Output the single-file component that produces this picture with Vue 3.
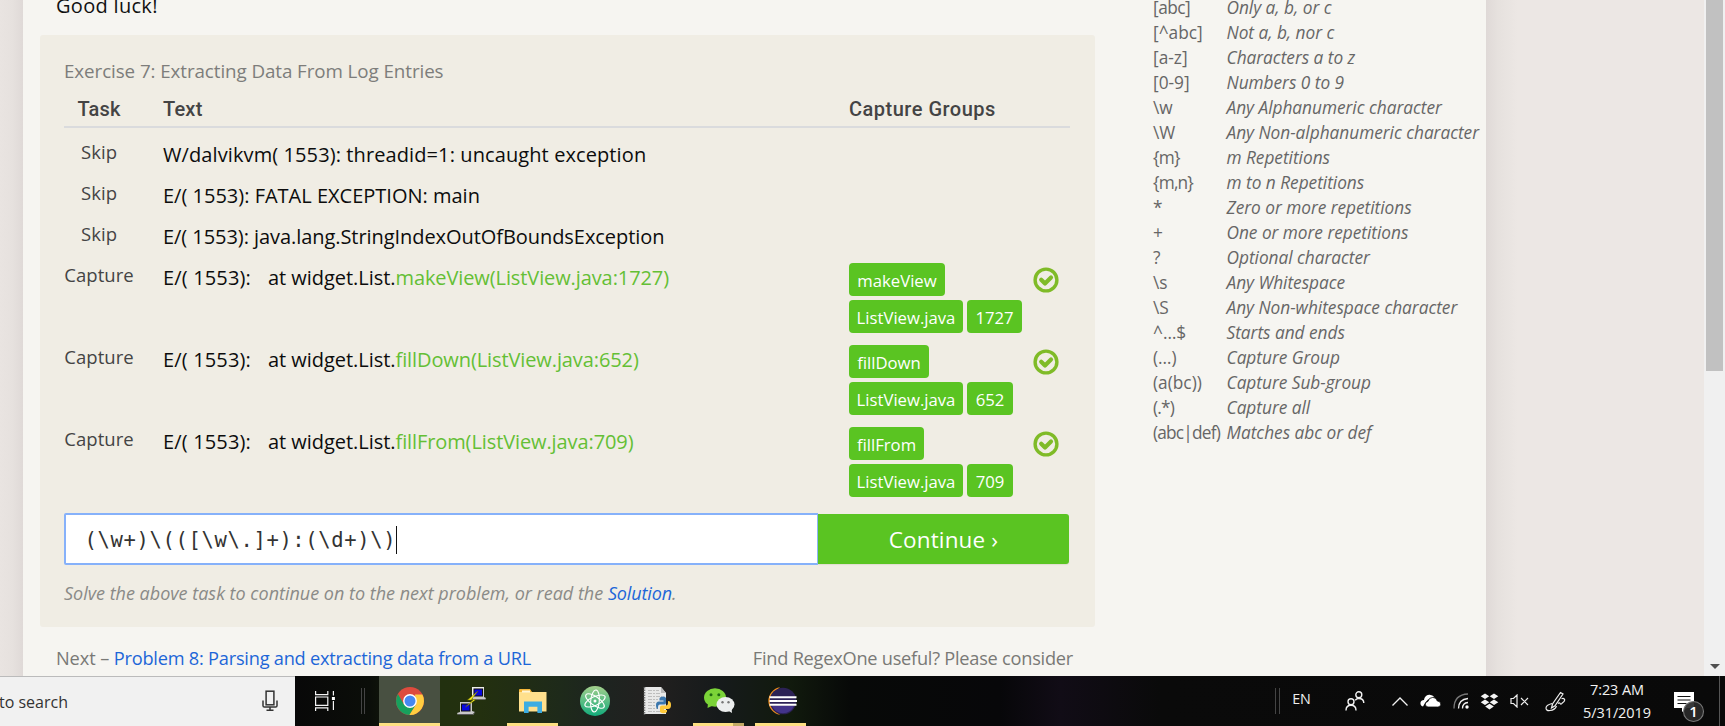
<script setup>
const skips = [
  { text: 'W/dalvikvm( 1553): threadid=1: uncaught exception', cls: 'wide' },
  { text: 'E/( 1553): FATAL EXCEPTION: main', cls: '' },
  { text: 'E/( 1553): java.lang.StringIndexOutOfBoundsException', cls: 'snug' },
]
const captures = [
  { hit: 'makeView(ListView.java:1727)', name: 'makeView', line: '1727', size: 'w96', lineSize: 'w55' },
  { hit: 'fillDown(ListView.java:652)', name: 'fillDown', line: '652', size: 'w80', lineSize: 'w46' },
  { hit: 'fillFrom(ListView.java:709)', name: 'fillFrom', line: '709', size: 'w75', lineSize: 'w46' },
]
const cheats = [
  ['[abc]', 'Only a, b, or c', 'k1'],
  ['[^abc]', 'Not a, b, nor c', ''],
  ['[a-z]', 'Characters a to z', ''],
  ['[0-9]', 'Numbers 0 to 9', ''],
  ['\\w', 'Any Alphanumeric character', ''],
  ['\\W', 'Any Non-alphanumeric character', ''],
  ['{m}', 'm Repetitions', 'k2'],
  ['{m,n}', 'm to n Repetitions', 'k2'],
  ['*', 'Zero or more repetitions', ''],
  ['+', 'One or more repetitions', ''],
  ['?', 'Optional character', ''],
  ['\\s', 'Any Whitespace', ''],
  ['\\S', 'Any Non-whitespace character', ''],
  ['^…$', 'Starts and ends', ''],
  ['(…)', 'Capture Group', ''],
  ['(a(bc))', 'Capture Sub-group', ''],
  ['(.*)', 'Capture all', 'k2'],
  ['(abc|def)', 'Matches abc or def', 'k2'],
]
</script>

<template>
  <div class="screen">
    <div class="viewport">
      <div class="gutter left"></div>
      <div class="sheet">
        <main class="lesson">
          <p class="luck">Good luck!</p>
          <section class="card">
            <h2 class="title">Exercise 7: Extracting Data From Log Entries</h2>
            <div class="row head">
              <div class="task">Task</div>
              <div class="text">Text</div>
              <div class="groups">Capture Groups</div>
            </div>
            <div class="rows">
              <div v-for="s in skips" :key="s.text" class="row">
                <div class="task">Skip</div>
                <div class="text" :class="s.cls">{{ s.text }}</div>
              </div>
              <div v-for="c in captures" :key="c.name" class="row tall">
                <div class="task">Capture</div>
                <div class="text"><span class="tag">E/( 1553):</span><span class="at">at widget.List.</span><span class="hit">{{ c.hit }}</span></div>
                <div class="groups">
                  <div class="badges"><b :class="c.size">{{ c.name }}</b></div>
                  <div class="badges"><b class="w114">ListView.java</b><b :class="c.lineSize">{{ c.line }}</b></div>
                </div>
                <svg class="ok" viewBox="0 0 26 26"><circle cx="13" cy="13" r="10.9" fill="none" stroke="#7fbb27" stroke-width="3.4" /><path d="M8.2 12.800 12 16.600 18 10.600" fill="none" stroke="#7fbb27" stroke-width="4.200" stroke-linejoin="round" stroke-linecap="round" /></svg>
              </div>
            </div>
            <div class="answer">
              <div class="field">(\w+)\(([\w\.]+):(\d+)\)<i class="caret"></i></div>
              <button class="go">Continue ›</button>
            </div>
            <p class="note">Solve the above task to continue on to the next problem, or read the <a>Solution</a>.</p>
          </section>
          <div class="foot">
            <p>Next – <a>Problem 8: Parsing and extracting data from a URL</a></p>
            <p class="find">Find RegexOne useful? Please consider</p>
          </div>
        </main>
        <aside class="cheats">
          <div v-for="c in cheats" :key="c[0]" class="cheat"><span class="key" :class="c[2]">{{ c[0] }}</span><i>{{ c[1] }}</i></div>
        </aside>
      </div>
      <div class="gutter right"></div>
      <div class="scroll"><div class="thumb"></div><div class="down"></div></div>
    </div>

    <div class="taskbar">
      <div class="search">
        <div class="query">to search</div>
        <svg class="mic" viewBox="0 0 16 22" fill="none" stroke="#333"><rect x="4.1" y="1.2" width="7.8" height="13.6" stroke-width="1.5" /><path d="M1 10.5v5.2q0 1.4 1.4 1.4h11.2q1.4 0 1.4-1.4v-5.2M8 17.5v2.5M4.5 20.2h7" stroke-width="1.5" /></svg>
      </div>
      <div class="cell view">
        <svg width="22" height="22" viewBox="0 0 22 22" fill="none" stroke="#f4f4f4" stroke-width="1.2"><path d="M1.6 1v3.6h12.2V1M1.6 21v-3.2h12.2V21M1.6 7h12.2v8.4H1.6zM19.4 1v4.4M19.4 11v9" /><rect x="17.9" y="7" width="3" height="3" fill="#fff" stroke="none" /></svg>
      </div>
      <div class="bars first"></div>
      <div class="app active under">
        <svg width="28" height="28" viewBox="0 0 28 28"><circle cx="14" cy="14" r="14" fill="#dd4b3e" /><path d="M1.9 7A14 14 0 0 0 13.6 28L20 17.4 14 14 8 17.4z" fill="#17a05d" /><path d="M26.4 7.6A14 14 0 0 1 13.4 28L20.2 17.2 19 7.6z" fill="#ffcd40" /><circle cx="14" cy="14" r="6.9" fill="#fff" /><circle cx="14" cy="14" r="5.5" fill="#4688f1" /></svg>
      </div>
      <div class="app">
        <svg width="29" height="30" viewBox="0 0 29 30"><path d="M15 1h12v10l2 1-1 2H16l-1-3z" fill="#c8c8c8" /><path d="M15 1h12v1.5H16.500v9H15zM3 17h12v1H4v8H3z" fill="#eee" /><rect x="17" y="3" width="8.500" height="7" fill="#0808e0" stroke="#111" /><path d="M3 16h12v9l3 1-2 3H1l-1-2 3-1z" fill="#c8c8c8" /><path d="M1 28.500h15l2-2.500" stroke="#555" fill="none" /><path d="M16 13.500h12" stroke="#666" /><rect x="4.500" y="18" width="8.500" height="7" fill="#0808e0" stroke="#111" /><path d="M21 5 10.500 14h5.500L8.500 21 19 13.500h-4.500z" fill="#f5ee22" stroke="#6d6900" stroke-width=".5" /></svg>
      </div>
      <div class="app under inset">
        <svg width="28" height="24" viewBox="0 0 28 24"><path d="M0 3V1q0-1 1-1h10l2 3z" fill="#f5b73a" /><path d="M0 3h27.500v19.500H0z" fill="#ffe08d" /><path d="M3 1.500h8v2H3z" fill="#fff6d8" /><path d="M5 24V12.500h18V24h-4.600v-6.300H9.600V24z" fill="#3cade2" /></svg>
      </div>
      <div class="app">
        <svg width="30" height="30" viewBox="0 0 30 30"><defs><linearGradient id="atom" x2="0" y2="1"><stop stop-color="#a3cf8c" /><stop offset="1" stop-color="#12ab7b" /></linearGradient></defs><circle cx="15" cy="15" r="15" fill="url(#atom)" /><g fill="none" stroke="#fff" stroke-width="1.100"><ellipse cx="15" cy="15" rx="11" ry="4.300" transform="rotate(-25 15 15)" /><ellipse cx="15" cy="15" rx="11" ry="4.300" transform="rotate(35 15 15)" /><ellipse cx="15" cy="15" rx="11" ry="4.300" transform="rotate(95 15 15)" /></g><circle cx="15" cy="15" r="1.500" fill="#fff" /></svg>
      </div>
      <div class="app">
        <svg width="29" height="30" viewBox="0 0 29 30"><path d="M1 1h17l5 6v21H1z" fill="#e8e8e8" /><path d="M18 1v6h5z" fill="#b9b9b9" /><path d="M5 4.500h11M5 7.500h12M5 10.500h14M5 13.500h10M5 16.500h8M5 19.500h8M5 22.500h10M5 25.500h14" stroke="#bdbdbd" stroke-dasharray="4 1 2 1" /><path d="M1.500 1v28" stroke="#777" stroke-width="1.600" stroke-dasharray="1.500 1" /><path d="M17 11.500q4-2 6 .5v5q0 1.500-2 1.500h-4q-2 0-2 3v1.500q-2 0-2-4 0-3.500 3-3.500h4.500v-1H16.500v-2z" fill="#3a76ad" /><path d="M25 15q3 0 3 4t-3 4h-4v1h3v2q-3.500 2.500-7 0v-5q0-1.500 2-1.500h4q2 0 2-3z" fill="#ffc93a" /></svg>
      </div>
      <div class="app under inset grouped">
        <svg width="31" height="26" viewBox="0 0 31 26"><ellipse cx="11" cy="9.500" rx="11" ry="9.300" fill="#7bd338" /><path d="M4 15 3.500 20 9 17.500z" fill="#7bd338" /><circle cx="7" cy="6.800" r="1.500" fill="#1f6a12" /><circle cx="14.800" cy="6.800" r="1.500" fill="#1f6a12" /><ellipse cx="21.500" cy="16.500" rx="9" ry="7.600" fill="#eceeee" /><path d="M24 22.500l4 2.500-.5-5z" fill="#eceeee" /><circle cx="18.500" cy="14.300" r="1.200" fill="#777" /><circle cx="24.500" cy="14.300" r="1.200" fill="#777" /></svg>
      </div>
      <div class="app under inset">
        <svg width="31" height="28" viewBox="0 0 31 28"><path d="M14 .2A14 14 0 0 0 14 27.800 17 17 0 0 1 14 .2z" fill="#f7931e" /><circle cx="17" cy="14" r="13.300" fill="#2c2255" /><path d="M6 19a12 12 0 0 0 22 0z" fill="#43348a" /><path d="M3.500 10.200h27M3.500 14h27.500M3.500 17.800h27" stroke="#fff" stroke-width="2.100" /></svg>
      </div>
      <div class="space"></div>
      <div class="bars"></div>
      <div class="lang">EN</div>
      <div class="cell people">
        <svg width="20" height="20" viewBox="0 0 20 20" fill="none" stroke="#f2f2f2" stroke-width="1.400"><circle cx="6" cy="10.800" r="3" /><path d="M1 19.500q0-5.200 5-5.200t5 5.200" /><circle cx="13.800" cy="3.800" r="3" /><path d="M10.200 9.200q1.500-1.700 3.600-1.700 5 0 5 4.600" /></svg>
      </div>
      <div class="cell w18"><svg width="16" height="9" viewBox="0 0 16 9" fill="none" stroke="#f2f2f2" stroke-width="1.300"><path d="M.5 8.500 8 1l7.500 7.500" /></svg></div>
      <div class="cell w42"><svg width="21" height="14" viewBox="0 0 21 14"><path d="M3 12.500Q0 11.500.5 8.500 1 6 4 6 4.500 1.500 9 .8q3.500-.3 5.500 2.500L8 5.500 5 9z" fill="#fff" /><path d="M8 13q-2.700-.3-2.700-2.800 0-2.300 2.700-2.800.9-4 4.800-4 3.600 0 4.500 3.600 3.700.3 3.500 3.200-.2 2.800-3 2.800z" fill="#fff" stroke="#0a0a0a" stroke-width=".8" /></svg></div>
      <div class="cell w19"><svg width="16" height="16" viewBox="0 0 16 16" fill="none" stroke="#eee" stroke-width="1.300"><circle cx="14" cy="14" r="1.700" fill="#fff" stroke="none" /><path d="M9.500 15.500q0-5.500 5.500-6" /><path d="M5.500 15.500Q5.500 6.500 15 5.500" /><path d="M1 15.500Q1 1.500 15 1" stroke="#777" /></svg></div>
      <div class="cell w38"><svg width="19" height="17" viewBox="0 0 19 17" fill="#f4f4f4"><path d="M5 .5 9.300 3.300 5 6.100.7 3.300zM14 .5l4.300 2.800L14 6.100 9.700 3.300zM5 6.500l4.300 2.800L5 12.100.7 9.300zM14 6.500l4.300 2.800-4.300 2.800-4.300-2.800zM9.500 10.800l4.300 2.800-4.300 2.900-4.300-2.900z" /></svg></div>
      <div class="cell w22"><svg width="19" height="14" viewBox="0 0 19 14" fill="none" stroke="#eee" stroke-width="1.200"><path d="M1 4.500h2.500L7 1v12L3.500 9.500H1zM11 4l7 7M18 4l-7 7" /></svg></div>
      <div class="cell w50"><svg width="21" height="21" viewBox="0 0 21 21" fill="none" stroke="#eee" stroke-width="1.200"><path d="M6.500 17 7.500 13 15.500 1.500 18 3 10 14.800zM7 12.500Q1 14 1 17t4 2.500q5-.5 6.500-4.500M13 12.500q1.500-1 2-.2.500 1.500 2 0 3.500-2.500 2.500-4t-3-.5" /></svg></div>
      <div class="clock"><div class="time">7:23 AM</div><div class="date">5/31/2019</div></div>
      <div class="cell notes">
        <svg width="32" height="32" viewBox="0 0 32 32"><path d="M1 1h20v16H14l-5 4v-4H1z" fill="#fff" /><path d="M4.500 5.500h13M4.500 9h13M4.500 12.500h9" stroke="#111" stroke-width="1.200" /><circle cx="20.500" cy="20.500" r="10" fill="#2a2a2a" fill-opacity=".93" stroke="#777" stroke-width="1.100" /></svg>
        <span class="count">1</span>
      </div>
      <div class="edge"></div>
    </div>
  </div>
</template>

<style>
body { margin: 0; }
</style>
<style scoped>
.screen { width: 1725px; height: 726px; overflow: hidden; font-family: "Open Sans", "Noto Sans", sans-serif; }
p, h2 { margin: 0; font-weight: 400; }
a { color: #1d66d8; }
.viewport { display: flex; height: 676px; overflow: hidden; background: #ece7e4; }
.gutter.left { width: 23px; background: linear-gradient(90deg, #e9e4e1, #e6e1de 55%, #dfd9d7); }
.gutter.right { flex: 1; background: linear-gradient(90deg, #dfd9d7, #e6e1de 12px, #ece7e4 32px); }
.sheet { width: 1463px; flex: none; display: flex; background: #f6f5f1; }
.scroll { width: 21px; background: #f0f0f0; display: flex; flex-direction: column; align-items: center; justify-content: space-between; }
.thumb { width: 17px; height: 371px; background: #c1c1c1; }
.down { margin-bottom: 7px; border: 5px solid transparent; border-top-color: #505050; border-bottom: 0; }

.lesson { width: 1055px; flex: none; padding-left: 17px; white-space: nowrap; }
.luck { margin-top: -8px; height: 43px; box-sizing: border-box; padding-left: 16px; font-size: 20px; line-height: 28px; letter-spacing: .3px; color: #111; }
.card { height: 592px; box-sizing: border-box; padding: 23px 26px 0 24px; background: #f0ede4; border-radius: 3px; }
.title { font-size: 18.8px; line-height: 26px; letter-spacing: -.08px; color: #7d7d7b; }
.row { display: flex; height: 41px; position: relative; }
.row.tall { height: 82px; }
.task { width: 70px; margin-right: 29px; text-align: center; font-size: 18.5px; line-height: 28px; letter-spacing: .05px; color: #444; padding-top: 1px; }
.text { width: 686px; font-size: 20px; line-height: 28px; padding-top: 4px; white-space: pre; color: #0c0c0c; }
.text.wide { letter-spacing: .1px; }
.text.snug { letter-spacing: -.06px; }
.row.head { height: 42px; border-bottom: 2px solid #dadbdd; margin-right: -1px; font-family: Roboto, sans-serif; font-weight: 500; }
.head > div { font-size: 20px; line-height: 26px; padding-top: 12px; color: #444; letter-spacing: .2px; }
.head .groups { letter-spacing: .5px; }
.rows { padding-top: 9px; }
.tag { display: inline-block; width: 105px; letter-spacing: .15px; }
.at { display: inline-block; width: 127.5px; letter-spacing: -.04px; }
.hit { color: #64bf35; letter-spacing: -.1px; }
.rows .groups { width: 184px; padding-top: 3px; }
.badges { display: flex; gap: 4px; margin-bottom: 4px; }
.badges b { height: 33px; border-radius: 4px; background: #5ac422; color: #fff; font-weight: 400; font-size: 16.7px; line-height: 35px; text-align: center; }
.w96 { width: 96px; }
.w80 { width: 80px; }
.w75 { width: 75px; }
.w114 { width: 114px; }
.w55 { width: 55px; }
.w46 { width: 46px; }
.ok { width: 26px; height: 26px; margin: 6.5px 0 0 .3px; }
.answer { display: flex; margin-top: 7px; height: 52px; }
.field { width: 754px; box-sizing: border-box; border: 2px solid #86b1fa; border-right-width: 1px; border-radius: 2px 0 0 2px; background: #fff; padding: 1px 0 0 18.5px; display: flex; align-items: center; font-family: "DejaVu Sans Mono", monospace; font-size: 20.5px; letter-spacing: .65px; color: #333; }
.caret { width: 1px; height: 28px; background: #111; }
.go { flex: 1; margin: 1px 0; padding: 1px 0 0; border: 0; border-radius: 0 3px 3px 0; background: #5ac422; color: #fff; font-family: "Open Sans", sans-serif; font-size: 22.5px; letter-spacing: .15px; box-shadow: 0 1px 1px #e0dccf; }
.note { margin-top: 15px; font-size: 18px; line-height: 26px; font-style: italic; color: #8a8a87; }
.note a { letter-spacing: -.14px; }
.foot { display: flex; justify-content: space-between; margin-top: 17px; padding: 0 22px 0 16px; font-size: 18.2px; line-height: 28px; letter-spacing: -.1px; color: #797976; }
.foot a { letter-spacing: -.22px; }
.find { letter-spacing: -.24px; }

.cheats { margin: -5px 0 0 58px; color: #666; font-size: 17.3px; line-height: 25px; white-space: nowrap; }
.cheat { display: flex; height: 25px; }
.key { width: 73.5px; flex: none; }
.k1 { letter-spacing: -.5px; }
.k2 { letter-spacing: -.8px; }
.cheat i { letter-spacing: -.03px; }

.taskbar { position: relative; display: flex; height: 50px; background: linear-gradient(90deg, #080808 295px, #0b0e09 370px, #22300f 440px, #23300f 480px, #1e2a1a 560px, #1d2420 600px, #22201f 650px, #161a1b 720px, #111a0d 790px, #070908 850px, #070709 1000px, #110c16 1060px, #0a0a0a 1160px, #090909 1725px); }
.search { width: 295px; flex: none; box-sizing: border-box; border-top: 1px solid #bbb; background: #f1f1f1; display: flex; justify-content: space-between; }
.query { margin-left: -1px; font-size: 16px; line-height: 50px; color: #333; white-space: nowrap; }
.mic { width: 16px; height: 22px; margin: 13px 17.5px 0 0; }
.cell, .app { display: flex; align-items: center; justify-content: center; position: relative; }
.view { width: 60px; }
.bars { width: 3px; height: 26px; margin-top: 12px; border: solid #444; border-width: 0 1px; }
.bars.first { margin: 12px 14px 0 6px; width: 2px; }
.app { width: 62px; }
.app.active { width: 61px; background: #485041; }
.under::after { content: ""; position: absolute; left: 0; right: 0; bottom: 0; height: 3px; background: #fddf82; }
.inset::after { left: 5px; right: 6px; }
.grouped::after { background: linear-gradient(90deg, #fddf82 40px, #c2a965 40px); }
.space { width: 463px; }
.lang { width: 35px; margin-left: 4px; text-align: center; font-size: 14.3px; line-height: 46px; color: #eee; }
.people { width: 72px; }
.w18 { width: 18px; }
.w42 { width: 42px; }
.w19 { width: 19px; }
.w38 { width: 38px; }
.w22 { width: 22px; }
.w50 { width: 50px; }
.clock { width: 74px; color: #f2f2f2; font-size: 14.5px; text-align: center; padding-top: 2px; }
.time, .date { line-height: 23px; letter-spacing: -.1px; white-space: nowrap; }
.notes { width: 70px; }
.notes svg { margin-top: 12px; }
.count { position: absolute; left: 27.5px; top: 24px; width: 24px; text-align: center; font-size: 15px; line-height: 22px; font-weight: 600; color: #fff; }
.edge { position: absolute; left: 1719px; top: 0; width: 1px; height: 50px; background: #555; }
</style>
